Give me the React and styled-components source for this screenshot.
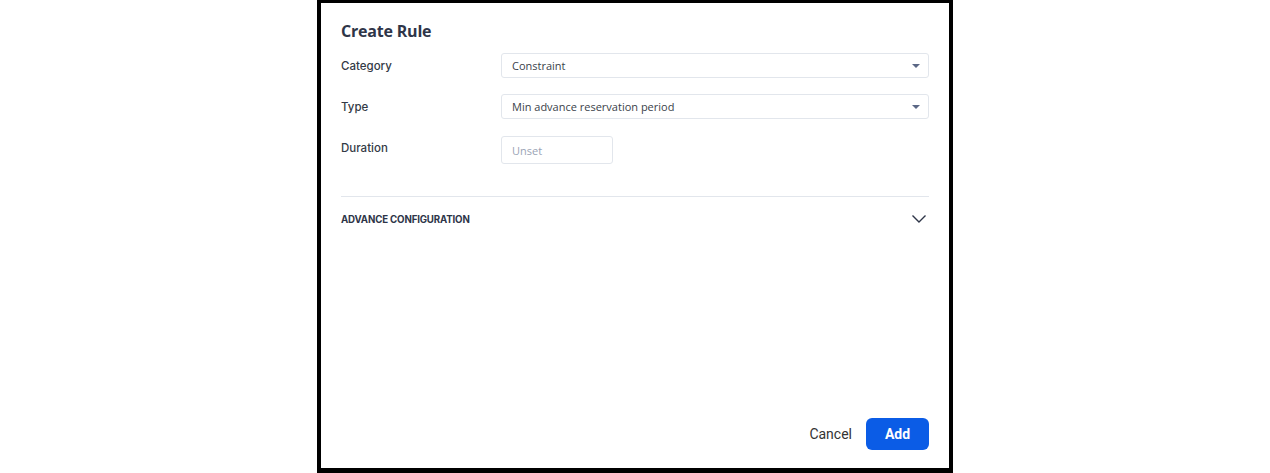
import React from "react";
import styled, { createGlobalStyle } from "styled-components";

const GlobalStyle = createGlobalStyle`
  html, body {
    margin: 0;
    padding: 0;
    background: #ffffff;
    font-family: "Inter", "Liberation Sans", sans-serif;
  }
`;

const Page = styled.div`
  height: 473px;
  display: flex;
  justify-content: center;
  overflow: hidden;
`;

const Modal = styled.div`
  box-sizing: border-box;
  width: 636px;
  height: 473px;
  border: 4px solid #000;
  border-top-width: 3px;
  border-bottom-width: 5px;
  background: #fff;
  padding: 18px 20px 18px 20px;
  display: flex;
  flex-direction: column;
`;

const Title = styled.h2`
  margin: 0;
  font-family: "Open Sans", "Inter", sans-serif;
  font-size: 16px;
  font-weight: 700;
  letter-spacing: -0.2px;
  color: #2e3548;
  line-height: 20px;
`;

const Form = styled.div`
  margin-top: 12px;
  display: flex;
  flex-direction: column;
  gap: 16px;
`;

const Row = styled.div`
  display: grid;
  grid-template-columns: 160px 1fr;
  align-items: center;
`;

const Label = styled.label`
  font-size: 11.5px;
  color: #333a46;
  font-weight: 500;
  margin-top: ${(p) => (p.$shift ? "-3px" : "0")};
`;

const Select = styled.div`
  box-sizing: border-box;
  height: 25px;
  border: 1px solid #e2e6ec;
  border-radius: 3px;
  display: flex;
  align-items: center;
  justify-content: space-between;
  padding: 0 8px 0 10px;
  font-family: "Open Sans", "Inter", sans-serif;
  font-size: 11px;
  color: #3a3f4a;
`;

const Caret = styled.span`
  width: 0;
  height: 0;
  border-left: 4px solid transparent;
  border-right: 4px solid transparent;
  border-top: 4px solid #5b6785;
`;

const Input = styled.div`
  box-sizing: border-box;
  width: 112px;
  height: 28px;
  margin-top: 1px;
  border: 1px solid #e2e6ec;
  border-radius: 3px;
  display: flex;
  align-items: center;
  padding-left: 10px;
  font-family: "Open Sans", "Inter", sans-serif;
  font-size: 11px;
  color: #9aa3b5;
`;

const Divider = styled.hr`
  margin: 32px 0 0 0;
  border: none;
  border-top: 1px solid #e2e6ec;
`;

const Accordion = styled.div`
  display: flex;
  align-items: center;
  justify-content: space-between;
  height: 44px;
  padding-right: 2px;
`;

const AccordionTitle = styled.span`
  font-size: 9.7px;
  font-weight: 700;
  color: #2e3548;
  letter-spacing: -0.15px;
`;

const Footer = styled.div`
  margin-top: auto;
  display: flex;
  justify-content: flex-end;
  align-items: center;
  gap: 14px;
`;

const TextButton = styled.button`
  border: none;
  background: none;
  padding: 0;
  font-family: "Roboto", "Inter", sans-serif;
  font-size: 14px;
  color: #333;
`;

const PrimaryButton = styled.button`
  width: 63px;
  height: 32px;
  border: none;
  border-radius: 6px;
  background: #0b5ce6;
  color: #fff;
  font-family: "Roboto", "Inter", sans-serif;
  font-size: 14px;
  font-weight: 700;
`;

export default function App() {
  return (
    <>
      <GlobalStyle />
      <Page>
        <Modal>
          <Title>Create Rule</Title>
          <Form>
            <Row>
              <Label>Category</Label>
              <Select>
                <span>Constraint</span>
                <Caret />
              </Select>
            </Row>
            <Row>
              <Label>Type</Label>
              <Select>
                <span>Min advance reservation period</span>
                <Caret />
              </Select>
            </Row>
            <Row>
              <Label $shift>Duration</Label>
              <Input>Unset</Input>
            </Row>
          </Form>
          <Divider />
          <Accordion>
            <AccordionTitle>ADVANCE CONFIGURATION</AccordionTitle>
            <svg width="16" height="10" viewBox="0 0 16 10" fill="none">
              <path d="M1.5 1.5 L8 8 L14.5 1.5" stroke="#2e3548" strokeWidth="1.4" />
            </svg>
          </Accordion>
          <Footer>
            <TextButton>Cancel</TextButton>
            <PrimaryButton>Add</PrimaryButton>
          </Footer>
        </Modal>
      </Page>
    </>
  );
}
